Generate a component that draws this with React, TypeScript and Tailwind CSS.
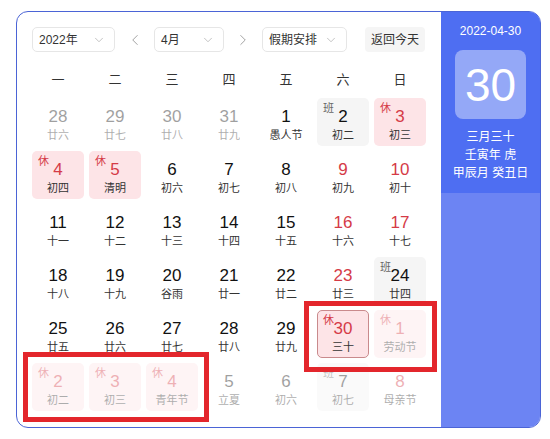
import { ChevronDown, ChevronLeft, ChevronRight } from 'lucide-react';

type Day = {
  n: number;
  lunar: string;
  other?: boolean;
  red?: boolean;
  tag?: '休' | '班';
  selected?: boolean;
};

const days: Day[] = [
  { n: 28, lunar: '廿六', other: true },
  { n: 29, lunar: '廿七', other: true },
  { n: 30, lunar: '廿八', other: true },
  { n: 31, lunar: '廿九', other: true },
  { n: 1, lunar: '愚人节' },
  { n: 2, lunar: '初二', tag: '班' },
  { n: 3, lunar: '初三', tag: '休', red: true },

  { n: 4, lunar: '初四', tag: '休', red: true },
  { n: 5, lunar: '清明', tag: '休', red: true },
  { n: 6, lunar: '初六' },
  { n: 7, lunar: '初七' },
  { n: 8, lunar: '初八' },
  { n: 9, lunar: '初九', red: true },
  { n: 10, lunar: '初十', red: true },

  { n: 11, lunar: '十一' },
  { n: 12, lunar: '十二' },
  { n: 13, lunar: '十三' },
  { n: 14, lunar: '十四' },
  { n: 15, lunar: '十五' },
  { n: 16, lunar: '十六', red: true },
  { n: 17, lunar: '十七', red: true },

  { n: 18, lunar: '十八' },
  { n: 19, lunar: '十九' },
  { n: 20, lunar: '谷雨' },
  { n: 21, lunar: '廿一' },
  { n: 22, lunar: '廿二' },
  { n: 23, lunar: '廿三', red: true },
  { n: 24, lunar: '廿四', tag: '班' },

  { n: 25, lunar: '廿五' },
  { n: 26, lunar: '廿六' },
  { n: 27, lunar: '廿七' },
  { n: 28, lunar: '廿八' },
  { n: 29, lunar: '廿九' },
  { n: 30, lunar: '三十', tag: '休', red: true, selected: true },
  { n: 1, lunar: '劳动节', tag: '休', red: true, other: true },

  { n: 2, lunar: '初二', tag: '休', red: true, other: true },
  { n: 3, lunar: '初三', tag: '休', red: true, other: true },
  { n: 4, lunar: '青年节', tag: '休', red: true, other: true },
  { n: 5, lunar: '立夏', other: true },
  { n: 6, lunar: '初六', other: true },
  { n: 7, lunar: '初七', tag: '班', other: true },
  { n: 8, lunar: '母亲节', red: true, other: true },
];

const weekdays = ['一', '二', '三', '四', '五', '六', '日'];

function Select({ label, width }: { label: string; width: string }) {
  return (
    <div
      className={`${width} h-[25px] flex items-center justify-between pl-[6px] pr-[8px] rounded-[5px] border border-[#e6e6e6] bg-white text-[12px] text-[#333]`}
    >
      <span>{label}</span>
      <ChevronDown className="w-[14px] h-[14px] text-[#aaa]" strokeWidth={1.2} />
    </div>
  );
}

function DayCell({ d }: { d: Day }) {
  let bg = '';
  if (d.tag === '休') bg = 'bg-[#fde4e7]';
  if (d.tag === '班') bg = 'bg-[#f5f5f5]';
  const border = d.selected ? 'border border-[#c98a8c]' : 'border border-transparent';

  return (
    <div
      className={`relative h-[48px] rounded-[5px] flex flex-col items-center pt-[8px] ${bg} ${border} ${d.other ? 'opacity-40' : ''}`}
    >
      {d.tag && (
        <span
          className={`absolute left-[5px] top-[2px] text-[11px] leading-[14px] ${d.tag === '休' ? 'text-[#d53b47]' : 'text-[#666]'}`}
        >
          {d.tag}
        </span>
      )}
      <span className={`text-[17px] leading-[20px] ${d.red ? 'text-[#d53b47]' : 'text-[#111]'}`}>
        {d.n}
      </span>
      <span className="text-[11px] leading-[16px] text-[#333]">{d.lunar}</span>
    </div>
  );
}

export default function App() {
  return (
    <div
      className="relative w-[550px] h-[439px] bg-white pt-[11px] pl-[16px]"
      style={{ fontFamily: '"Liberation Sans", "Noto Sans CJK SC", sans-serif' }}
    >
      <div className="w-[525px] h-[417px] flex rounded-[12px] border border-[#4b64d6] overflow-hidden">
        {/* Calendar */}
        <div className="w-[424px] pt-[15px] pl-[15px] pr-[15px]">
          <div className="flex items-center">
            <Select label="2022年" width="w-[83px]" />
            <button className="w-[39px] flex justify-center text-[#999]">
              <ChevronLeft className="w-[18px] h-[18px]" strokeWidth={1.2} />
            </button>
            <Select label="4月" width="w-[70px]" />
            <button className="w-[38px] flex justify-center text-[#999]">
              <ChevronRight className="w-[18px] h-[18px]" strokeWidth={1.2} />
            </button>
            <Select label="假期安排" width="w-[85px]" />
            <button className="ml-[18px] w-[60px] h-[25px] rounded-[4px] bg-[#f5f5f5] text-[12px] text-[#333]">
              返回今天
            </button>
          </div>

          <div className="grid grid-cols-7 gap-x-[5px] mt-[16px] h-[24px] items-center text-[13px] text-[#333]">
            {weekdays.map((w) => (
              <div key={w} className="text-center">
                {w}
              </div>
            ))}
          </div>

          <div className="grid grid-cols-7 gap-x-[5px] gap-y-[5px] mt-[6px]">
            {days.map((d, i) => (
              <DayCell key={i} d={d} />
            ))}
          </div>
        </div>

        {/* Side panel */}
        <div className="flex-1 flex flex-col bg-[#6c84f3]">
          <div className="h-[181px] bg-[#4e6ef2] flex flex-col items-center text-white">
            <div className="mt-[11px] text-[12px] leading-[16px]">2022-04-30</div>
            <div className="mt-[11px] w-[71px] h-[69px] rounded-[8px] bg-white/40 flex items-center justify-center text-[46px] leading-none">
              30
            </div>
            <div className="mt-[9px] text-[12px] leading-[18px] text-center">
              <div>三月三十</div>
              <div>壬寅年 虎</div>
              <div>甲辰月 癸丑日</div>
            </div>
          </div>
        </div>
      </div>

      {/* Annotation boxes */}
      <div className="absolute left-[304px] top-[301px] w-[133px] h-[71px] border-[5px] border-[#e3262c]" />
      <div className="absolute left-[23px] top-[352px] w-[186px] h-[70px] border-[5px] border-[#e3262c]" />
    </div>
  );
}
